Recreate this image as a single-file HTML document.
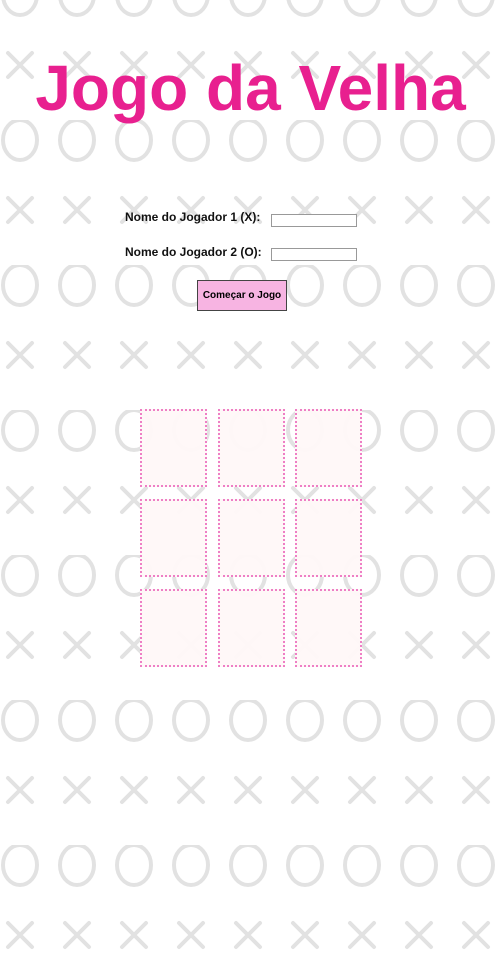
<!DOCTYPE html>
<html><head><meta charset="utf-8"><style>
html,body{margin:0;padding:0;}
body{width:501px;height:960px;position:relative;overflow:hidden;background:#fff;font-family:"Liberation Sans",sans-serif;}
svg.bg{position:absolute;left:0;top:0;}
h1{position:absolute;left:0;width:501px;top:48px;margin:0;text-align:center;font-size:64px;font-weight:bold;color:#e8208f;white-space:nowrap;line-height:80px;font-family:"Liberation Sans",sans-serif;}
.lbl{position:absolute;font-size:12px;font-weight:bold;color:#111;}
.inp{position:absolute;left:271px;width:84px;height:11px;border:1px solid #999;background:#fff;}
.btn{position:absolute;left:197px;top:280px;width:88px;height:29px;background:#f7b4e2;border:1px solid #444;font-size:10px;font-weight:bold;text-align:center;line-height:29px;}
.cell{position:absolute;width:63px;height:74px;border:2px dotted #ee7fc5;background:rgba(255,248,248,0.95);}
</style></head><body>
<svg class="bg" width="501" height="960">
<defs><pattern id="p" width="57" height="145" patternUnits="userSpaceOnUse" x="-8" y="-25">
<ellipse cx="28" cy="20" rx="17" ry="20" fill="none" stroke="#e2e2e2" stroke-width="4"/>
<path d="M16 78 L40 102 M40 78 L16 102" stroke="#e2e2e2" stroke-width="4" fill="none" stroke-linecap="round"/>
</pattern></defs>
<rect width="501" height="960" fill="url(#p)"/>
</svg>
<h1>Jogo da Velha</h1>
<div class="lbl" style="left:125px;top:210px">Nome do Jogador 1 (X):</div>
<div class="inp" style="top:214px"></div>
<div class="lbl" style="left:125px;top:245px">Nome do Jogador 2 (O):</div>
<div class="inp" style="top:248px"></div>
<div class="btn">Começar o Jogo</div>
<div class="cell" style="left:140px;top:409px"></div>
<div class="cell" style="left:218px;top:409px"></div>
<div class="cell" style="left:295px;top:409px"></div>
<div class="cell" style="left:140px;top:499px"></div>
<div class="cell" style="left:218px;top:499px"></div>
<div class="cell" style="left:295px;top:499px"></div>
<div class="cell" style="left:140px;top:589px"></div>
<div class="cell" style="left:218px;top:589px"></div>
<div class="cell" style="left:295px;top:589px"></div>
</body></html>
